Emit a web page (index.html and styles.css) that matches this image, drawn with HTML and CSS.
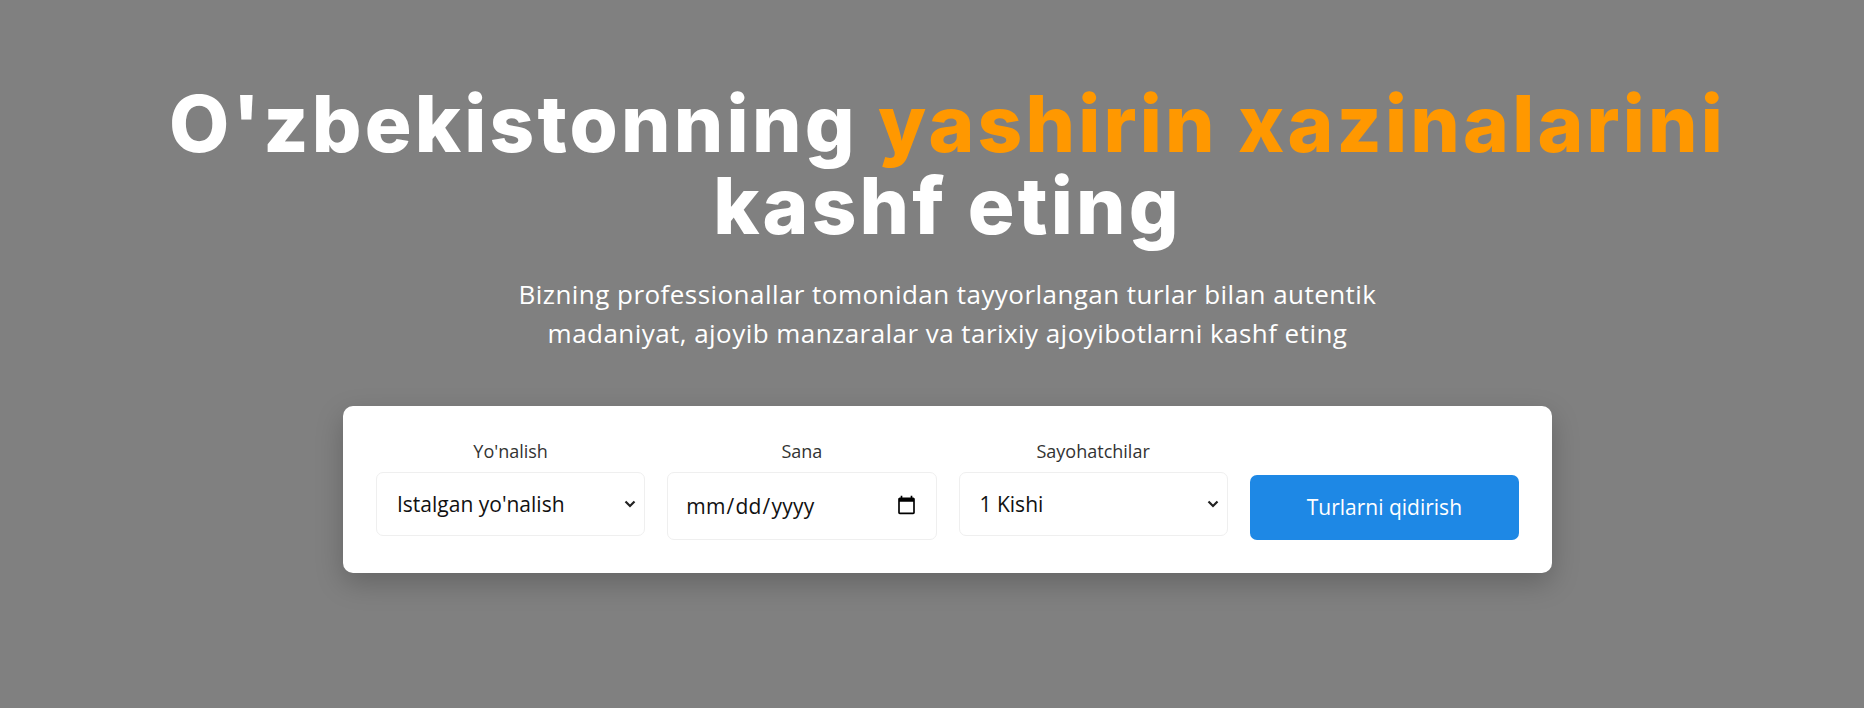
FILE: index.html
```html
<!DOCTYPE html>
<html lang="uz">
<head>
<meta charset="utf-8">
<title>O'zbekiston turlari</title>
<link rel="stylesheet" href="styles.css">
</head>
<body>
<section class="hero">
  <h1 class="hero-title">O'zbekistonning <span class="accent">yashirin xazinalarini</span> kashf eting</h1>
  <p class="hero-sub">Bizning professionallar tomonidan tayyorlangan turlar bilan autentik madaniyat, ajoyib manzaralar va tarixiy ajoyibotlarni kashf eting</p>
  <form class="search-card">
    <div class="field">
      <label class="field-label" for="dest">Yo'nalish</label>
      <select id="dest" class="field-input field-select">
        <option>Istalgan yo'nalish</option>
        <option>Samarqand</option>
        <option>Buxoro</option>
        <option>Xiva</option>
      </select>
    </div>
    <div class="field">
      <label class="field-label" for="date">Sana</label>
      <input id="date" type="date" class="field-input date-input">
    </div>
    <div class="field">
      <label class="field-label" for="people">Sayohatchilar</label>
      <select id="people" class="field-input field-select">
        <option>1 Kishi</option>
        <option>2 Kishi</option>
        <option>3 Kishi</option>
      </select>
    </div>
    <button type="button" class="search-btn">Turlarni qidirish</button>
  </form>
</section>
</body>
</html>
```

FILE: styles.css
```css
* { box-sizing: border-box; }

html, body {
  margin: 0;
  padding: 0;
  background: #808080;
}

body {
  font-family: "Open Sans", "Liberation Sans", sans-serif;
  color: #ffffff;
}

.hero {
  height: 708px;
  padding: 83px 0 0 31px;
  display: flex;
  flex-direction: column;
  align-items: center;
}

.hero-title {
  margin: 0;
  max-width: 1620px;
  text-align: center;
  font-family: "Inter", "DejaVu Sans", sans-serif;
  font-weight: 800;
  font-size: 78px;
  line-height: 82px;
  letter-spacing: 3.2px;
  color: #ffffff;
}

.accent { color: #ff9800; }

.hero-sub {
  margin: 28px 0 0;
  max-width: 900px;
  text-align: center;
  font-size: 26px;
  letter-spacing: 0.45px;
  line-height: 39px;
  color: #ffffff;
}

.search-card {
  margin-top: 53px;
  width: 1209px;
  padding: 33px;
  background: #ffffff;
  border-radius: 10px;
  box-shadow: 0 10px 28px rgba(0, 0, 0, 0.22);
  display: grid;
  grid-template-columns: repeat(4, 1fr);
  column-gap: 22px;
  align-items: start;
}

.field {
  display: flex;
  flex-direction: column;
}

.field-label {
  text-align: center;
  font-size: 18px;
  line-height: 24.5px;
  color: #333333;
  margin-bottom: 8px;
}

.field-input {
  width: 100%;
  height: 64px;
  font-family: "Open Sans", "Liberation Sans", sans-serif;
  font-size: 21px;
  color: #111111;
  background-color: #ffffff;
  border: 1px solid #efefef;
  border-radius: 7px;
  padding: 0 30px 0 20px;
  outline: none;
}

.field-select {
  appearance: none;
  -webkit-appearance: none;
  background-image: url("data:image/svg+xml;utf8,<svg xmlns='http://www.w3.org/2000/svg' width='12' height='8' viewBox='0 0 12 8'><path d='M1.5 1.5 L6 6 L10.5 1.5' fill='none' stroke='%23222' stroke-width='2.2'/></svg>");
  background-repeat: no-repeat;
  background-position: right 8px center;
  background-size: 12px 8px;
}

.date-input {
  height: 68px;
  padding: 0 17px 0 17px;
  letter-spacing: 0.2px;
}

.search-btn {
  align-self: end;
  height: 65px;
  border: none;
  border-radius: 7px;
  background: #1e88e5;
  color: #ffffff;
  font-family: "Open Sans", "Liberation Sans", sans-serif;
  font-size: 21px;
  cursor: pointer;
}
```
